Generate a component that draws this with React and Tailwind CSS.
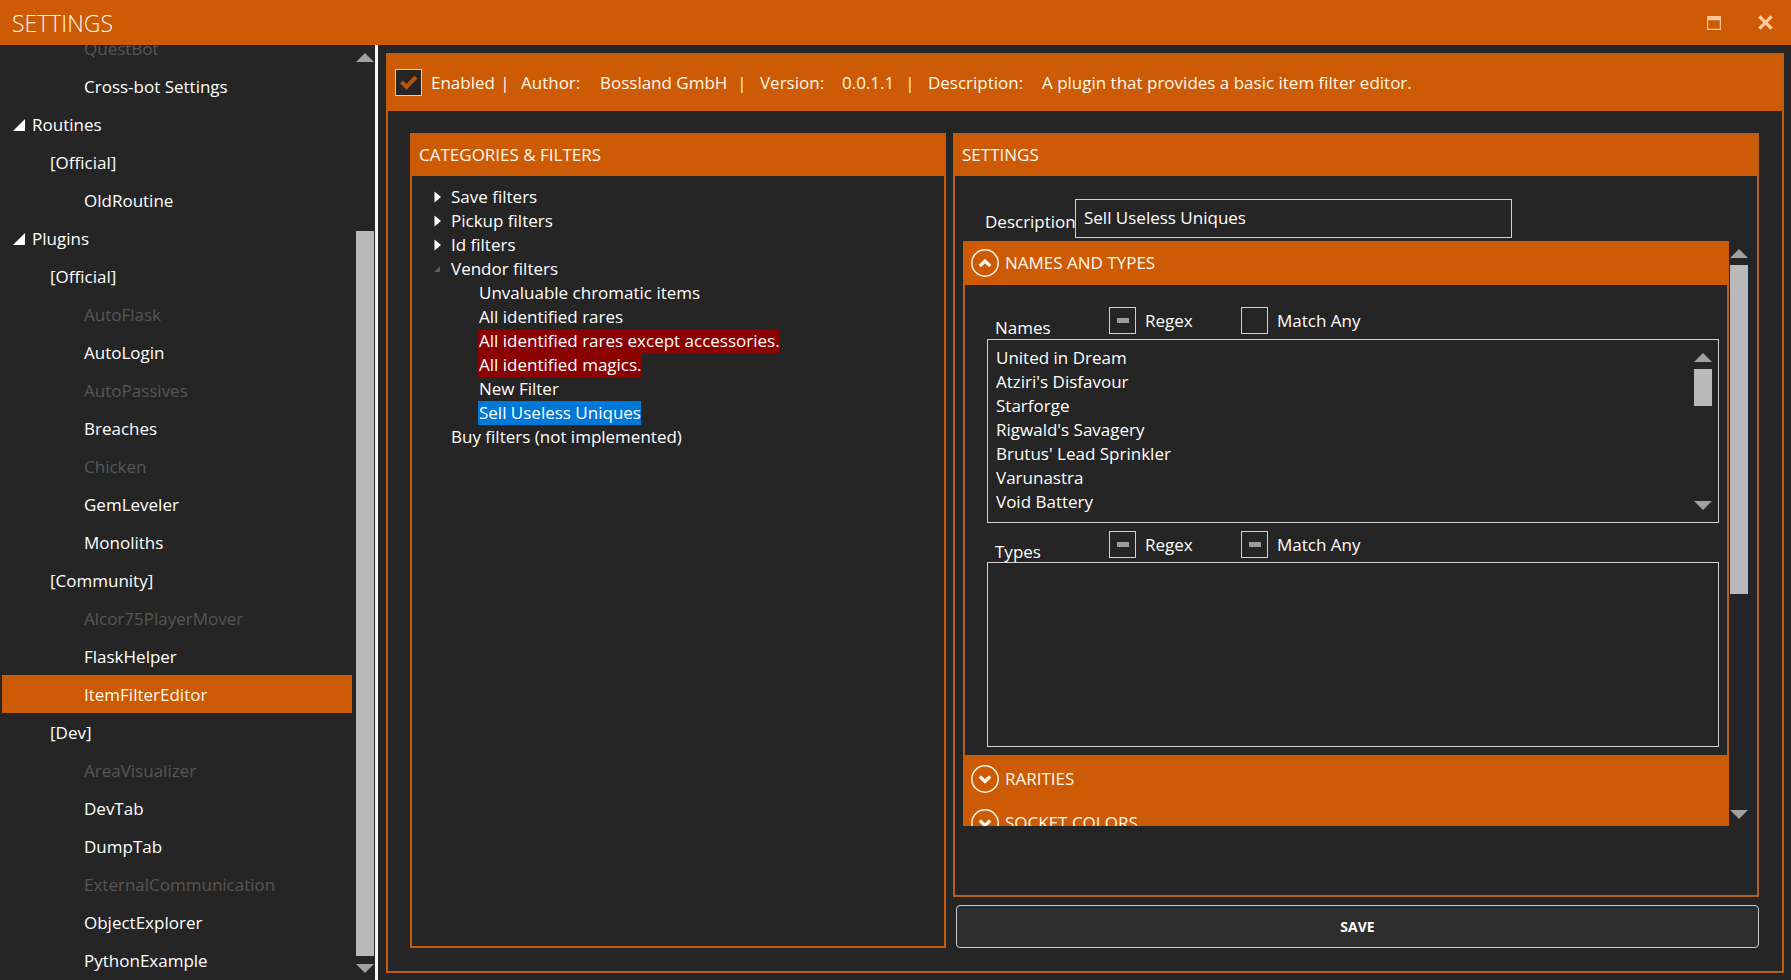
import React, { useState, useEffect, useRef } from 'react';

const sidebarItems = [
    { label: 'QuestBot', level: 2, disabled: true },
    { label: 'Cross-bot Settings', level: 2 },
    { label: 'Routines', level: 0 },
    { label: '[Official]', level: 1 },
    { label: 'OldRoutine', level: 2 },
    { label: 'Plugins', level: 0 },
    { label: '[Official]', level: 1 },
    { label: 'AutoFlask', level: 2, disabled: true },
    { label: 'AutoLogin', level: 2 },
    { label: 'AutoPassives', level: 2, disabled: true },
    { label: 'Breaches', level: 2 },
    { label: 'Chicken', level: 2, disabled: true },
    { label: 'GemLeveler', level: 2 },
    { label: 'Monoliths', level: 2 },
    { label: '[Community]', level: 1 },
    { label: 'Alcor75PlayerMover', level: 2, disabled: true },
    { label: 'FlaskHelper', level: 2 },
    { label: 'ItemFilterEditor', level: 2 },
    { label: '[Dev]', level: 1 },
    { label: 'AreaVisualizer', level: 2, disabled: true },
    { label: 'DevTab', level: 2 },
    { label: 'DumpTab', level: 2 },
    { label: 'ExternalCommunication', level: 2, disabled: true },
    { label: 'ObjectExplorer', level: 2 },
    { label: 'PythonExample', level: 2 },
];

const vendorFilters = [
    { label: 'Unvaluable chromatic items' },
    { label: 'All identified rares' },
    { label: 'All identified rares except accessories.', invalid: true },
    { label: 'All identified magics.', invalid: true },
    { label: 'New Filter' },
    { label: 'Sell Useless Uniques' },
];

const names = [
    'United in Dream',
    "Atziri's Disfavour",
    'Starforge',
    "Rigwald's Savagery",
    "Brutus' Lead Sprinkler",
    'Varunastra',
    'Void Battery',
].join('\n');

const indents = ['pl-[11px]', 'pl-12', 'pl-[82px]'];

// before / thumb / after are the shares of the track
const ScrollBar = ({ before, thumb, after }) => (
    <div className="flex w-[18px] shrink-0 flex-col items-center pt-2 pb-[7px]" aria-hidden="true">
        <svg className="h-[9px] w-[18px] shrink-0" viewBox="0 0 18 9">
            <path d="M0 9 L9 0 L18 9 Z" fill="#a0a0a0" />
        </svg>
        <div className="mt-[7px] mb-2 flex w-full flex-1 flex-col">
            <div style={{ flexGrow: before }}></div>
            <div className="bg-[#b9b9b9]" style={{ flexGrow: thumb }}></div>
            <div style={{ flexGrow: after }}></div>
        </div>
        <svg className="h-[9px] w-[18px] shrink-0" viewBox="0 0 18 9">
            <path d="M0 0 L9 9 L18 0 Z" fill="#a0a0a0" />
        </svg>
    </div>
);

const CheckBox = ({ label, initial }) => {
    const [value, setValue] = useState(initial);
    const ref = useRef(null);

    useEffect(() => {
        ref.current.indeterminate = value === null;
    }, [value]);

    return (
        <label className="flex items-center gap-[9px]">
            <span className="grid place-items-center">
                <input
                    ref={ref}
                    type="checkbox"
                    checked={value === true}
                    onChange={() => setValue(!value)}
                    className="col-start-1 row-start-1 size-[27px] appearance-none border border-[#d0d0d0] bg-[#252525]"
                />
                {value === true && (
                    <svg className="pointer-events-none z-10 col-start-1 row-start-1 size-[27px]" viewBox="0 0 27 27" fill="none">
                        <path d="M6.5 13 L11.5 18 L21 8" stroke="#b9560c" strokeWidth="4" />
                    </svg>
                )}
                {value === null && (
                    <span className="pointer-events-none z-10 col-start-1 row-start-1 h-[5px] w-3 bg-[#9c9c9c]"></span>
                )}
            </span>
            {label}
        </label>
    );
};

const SectionHeader = ({ title, open, onClick }) => (
    <button
        type="button"
        onClick={onClick}
        aria-expanded={open}
        className={`flex h-11 w-full shrink-0 items-center gap-[6px] bg-[#cd5a04] px-2 text-[#fff8ea] ${open ? '' : 'pt-1'}`}
    >
        <svg className="size-7" viewBox="0 0 28 28" fill="none" stroke="currentColor">
            <circle cx="14" cy="14" r="13.2" strokeWidth="1.5" />
            <path d={open ? 'M8.8 17 L14 12 L19.2 17' : 'M8.8 11.5 L14 16.5 L19.2 11.5'} strokeWidth="3.2" />
        </svg>
        {title}
    </button>
);

const Sidebar = () => {
    const [selected, setSelected] = useState('ItemFilterEditor');

    return (
        <nav className="flex w-[378px] shrink-0 border-r-[3px] border-[#f4f4f4] pr-px">
            {/* List is scrolled to its end */}
            <ul className="flex min-w-0 flex-1 flex-col justify-end overflow-hidden pr-1 pb-px pl-[2px]">
                {sidebarItems.map((item, i) => (
                    <li key={i} className="shrink-0">
                        <button
                            type="button"
                            onClick={() => setSelected(item.label)}
                            className={`flex h-[38px] w-full items-center gap-[7px] pt-px text-left ${indents[item.level]} ${
                                item.label === selected ? 'bg-[#cd5a04] text-[#fff8ea]' : item.disabled ? 'text-[#565656]' : 'text-white'
                            }`}
                        >
                            {item.level === 0 && (
                                <svg className="size-3" viewBox="0 0 12 12">
                                    <path d="M12 0 V12 H0 Z" fill="white" />
                                </svg>
                            )}
                            {item.label}
                        </button>
                    </li>
                ))}
            </ul>
            <ScrollBar before={162} thumb={725} after={0} />
        </nav>
    );
};

const FilterTree = () => {
    const [selected, setSelected] = useState('Sell Useless Uniques');

    return (
        <section className="flex flex-col border-2 border-[#c65a0a]">
            <h2 className="flex h-[41px] shrink-0 items-center bg-[#cd5a04] px-[7px] pb-px text-[#fff8ea]">CATEGORIES &amp; FILTERS</h2>
            <ul className="px-[22px] pt-[9px] leading-6">
                {['Save filters', 'Pickup filters', 'Id filters'].map((label) => (
                    <li key={label} className="flex items-center gap-[9px]">
                        <svg className="h-3 w-2" viewBox="0 0 8 12">
                            <path d="M0.5 0.5 L7 6 L0.5 11.5 Z" fill="white" />
                        </svg>
                        {label}
                    </li>
                ))}
                <li>
                    <div className="flex items-center gap-[9px]">
                        <svg className="h-2 w-2" viewBox="0 0 8 8">
                            <path d="M6 1 V7 H0 Z" fill="#5c5c5c" />
                        </svg>
                        Vendor filters
                    </div>
                    <ul className="pl-11">
                        {vendorFilters.map((f) => (
                            <li key={f.label} className="flex">
                                <button
                                    type="button"
                                    onClick={() => setSelected(f.label)}
                                    className={`h-6 pl-px ${
                                        f.label === selected ? 'bg-[#0078d7]' : f.invalid ? 'bg-[#8b0000]' : ''
                                    }`}
                                >
                                    {f.label}
                                </button>
                            </li>
                        ))}
                    </ul>
                </li>
                <li className="pl-[17px]">Buy filters (not implemented)</li>
            </ul>
        </section>
    );
};

const MatchOptions = ({ label, htmlFor, regex, matchAny }) => (
    <div className="grid grid-cols-[114px_132px_1fr] pl-2">
        <label htmlFor={htmlFor} className="self-end leading-3">
            {label}
        </label>
        <CheckBox label="Regex" initial={regex} />
        <CheckBox label="Match Any" initial={matchAny} />
    </div>
);

const FilterSettings = () => {
    const [open, setOpen] = useState(true);

    return (
        <section className="flex min-h-0 flex-1 flex-col border-2 border-[#b45f1c]">
            <h2 className="-mx-px flex h-[41px] shrink-0 items-center bg-[#cd5a04] px-2 pb-px text-[#fff8ea]">SETTINGS</h2>
            <div className="flex pt-[23px] pl-[30px]">
                <label htmlFor="description" className="w-[90px] self-end pb-1">
                    Description
                </label>
                <input
                    id="description"
                    type="text"
                    defaultValue="Sell Useless Uniques"
                    className="h-[39px] w-[437px] border border-[#d0d0d0] bg-transparent px-2 pb-[2px] outline-none"
                />
            </div>

            <div className="mt-[3px] mb-[69px] flex min-h-0 flex-1 pr-2 pl-2">
                <div className="flex min-w-0 flex-1 flex-col overflow-hidden">
                    <SectionHeader title="NAMES AND TYPES" open={open} onClick={() => setOpen(!open)} />
                    {open && (
                        <div className="shrink-0 border-x-2 border-[#b45f1c] px-2 pt-[22px] pb-2 pl-[22px]">
                            <MatchOptions label="Names" htmlFor="names" regex={null} matchAny={false} />
                            <div className="mt-[5px] flex h-[184px] border border-[#d0d0d0] py-[5px] pr-[6px] pl-2">
                                <textarea
                                    id="names"
                                    wrap="off"
                                    defaultValue={names}
                                    className="min-w-0 flex-1 resize-none overflow-hidden bg-transparent pt-px leading-6 outline-none"
                                />
                                <ScrollBar before={0} thumb={37} after={87} />
                            </div>
                            <div className="pt-2">
                                <MatchOptions label="Types" htmlFor="types" regex={null} matchAny={null} />
                            </div>
                            <textarea
                                id="types"
                                className="mt-1 block h-[185px] w-full resize-none border border-[#d0d0d0] bg-transparent px-2 py-[5px] leading-6 outline-none"
                            />
                        </div>
                    )}
                    <SectionHeader title="RARITIES" open={false} />
                    <SectionHeader title="SOCKET COLORS" open={false} />
                </div>
                <div className="flex px-px">
                    <ScrollBar before={0} thumb={329} after={208} />
                </div>
            </div>
        </section>
    );
};

const PluginHeader = () => (
    <div className="flex h-14 shrink-0 items-center bg-[#cd5a04] px-[7px] pb-px whitespace-nowrap text-[#fff8ea]">
        <CheckBox label="Enabled" initial={true} />
        <span className="w-5 text-center">|</span>
        <span className="w-[79px] pl-[6px]">Author:</span>
        <span className="w-[138px] pl-[6px]">Bossland GmbH</span>
        <span className="w-5 text-center">|</span>
        <span className="w-[82px] pl-2">Version:</span>
        <span className="w-[66px] pl-2">0.0.1.1</span>
        <span className="w-5 text-center">|</span>
        <span className="w-[114px] pl-2">Description:</span>
        <span className="pl-2">A plugin that provides a basic item filter editor.</span>
    </div>
);

const App = () => {
    return (
        <div className="flex h-screen flex-col bg-[#252525] font-['Open_Sans','Noto_Sans',sans-serif] text-[17px] text-white">
            {/* Title bar */}
            <header className="flex h-[45px] shrink-0 items-center justify-between bg-[#cd5a04] pr-[18px] pl-3 text-[#fff8ea]">
                <h1 className="pt-[2px] text-[23px] font-light">SETTINGS</h1>
                <div className="flex items-center gap-[37px]">
                    <button type="button" aria-label="Maximize">
                        <svg className="size-[14px]" viewBox="0 0 14 14">
                            <path d="M0 0 H14 V14 H0 Z M1.2 4.2 V12.8 H12.8 V4.2 Z" fillRule="evenodd" fill="#ffc795" />
                        </svg>
                    </button>
                    <button type="button" aria-label="Close">
                        <svg className="size-[15px]" viewBox="0 0 16 16">
                            <path d="M1.5 1.5 L14.5 14.5 M14.5 1.5 L1.5 14.5" stroke="#ffcda0" strokeWidth="3.6" />
                        </svg>
                    </button>
                </div>
            </header>

            <div className="flex min-h-0 flex-1">
                <Sidebar />
                <main className="flex min-w-0 flex-1 p-2 pr-[7px] pb-[7px]">
                    <div className="flex min-w-0 flex-1 flex-col border-2 border-[#c05c10]">
                        <PluginHeader />
                        <div className="grid min-h-0 flex-1 grid-cols-[536fr_806fr] gap-[7px] p-[22px] pr-[23px] pb-[23px]">
                            <FilterTree />
                            <div className="flex min-h-0 min-w-0 flex-col gap-2">
                                <FilterSettings />
                                <button
                                    type="button"
                                    className="ml-[3px] h-[43px] shrink-0 rounded border border-[#c8c8c8] bg-[#2e2e2e] text-sm font-bold"
                                >
                                    SAVE
                                </button>
                            </div>
                        </div>
                    </div>
                </main>
            </div>
        </div>
    );
};

export default App;
